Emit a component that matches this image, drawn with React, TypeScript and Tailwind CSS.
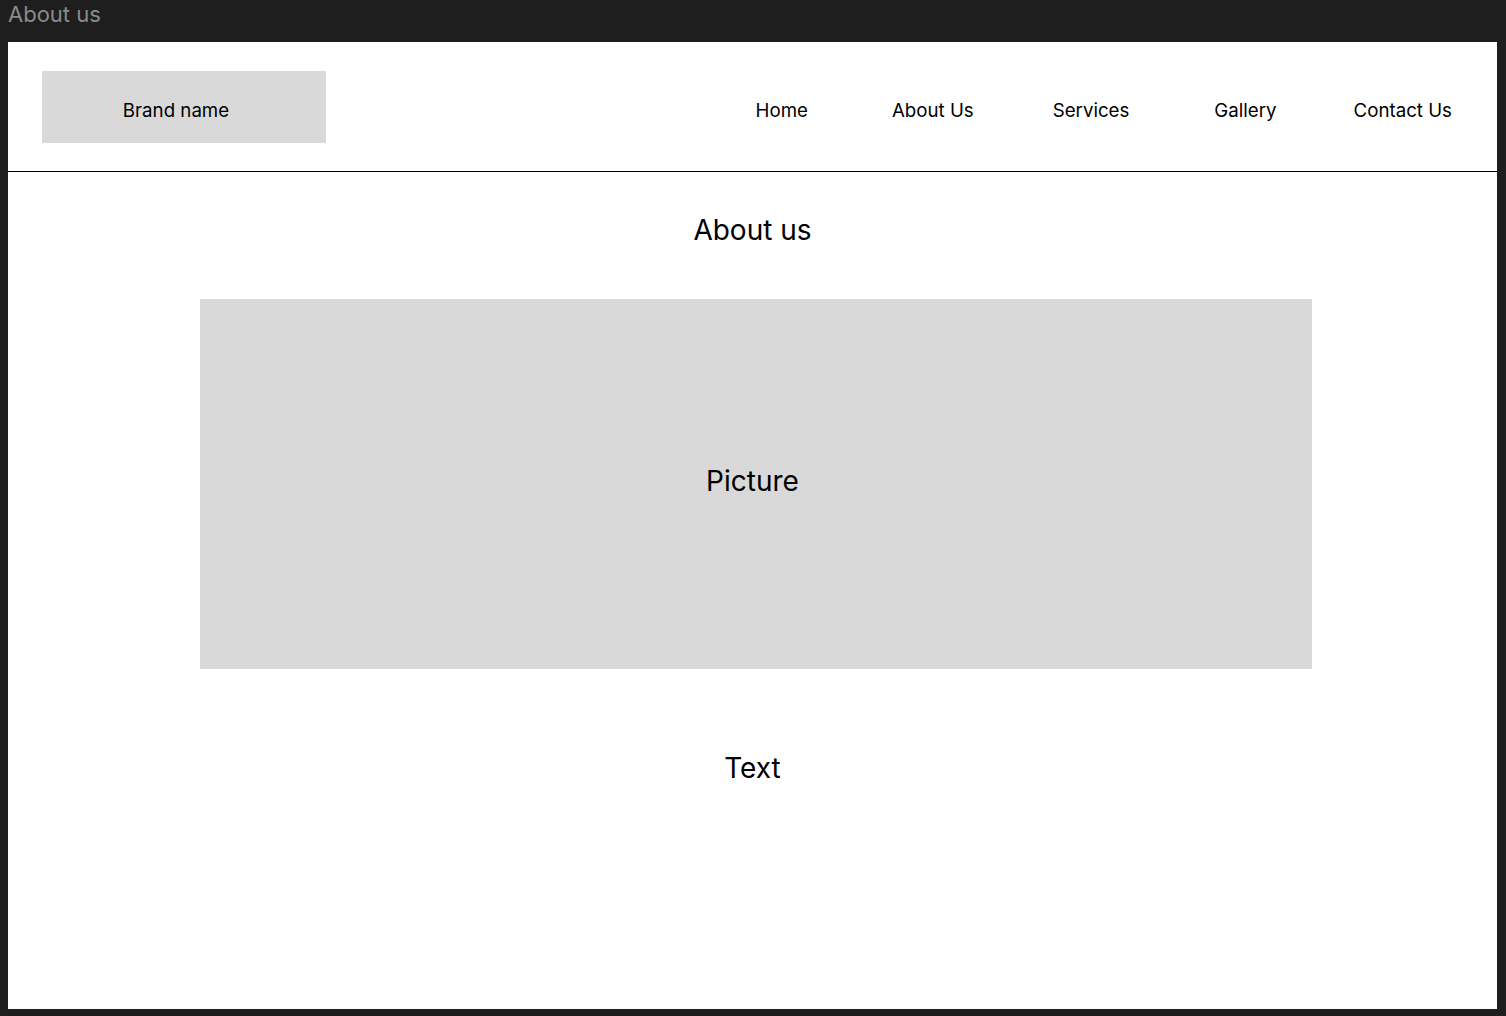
import React from 'react';

const navItems = [
  { label: 'Home', cls: '' },
  { label: 'About Us', cls: 'ml-[84px]' },
  { label: 'Services', cls: 'ml-[79px]' },
  { label: 'Gallery', cls: 'ml-[85px]' },
  { label: 'Contact Us', cls: 'ml-[77px]' },
];

export default function App() {
  return (
    <div className="w-full h-[1016px] bg-[#1e1e1e] overflow-hidden font-['Inter',sans-serif] text-black">
      {/* Frame label */}
      <div className="h-[42px] pl-[8px] text-[22px] leading-[28px] text-[#8b8b8b]">About us</div>

      {/* Frame */}
      <div className="ml-[8px] w-[1489px] h-[967px] bg-white">
        {/* Header */}
        <header className="h-[130px] border-b border-black flex items-start pl-[34px] pr-[45px]">
          <div className="mt-[29px] w-[284px] h-[72px] bg-[#d9d9d9] flex items-center justify-center">
            <span className="text-[18.7px] leading-[22px] pt-[7px] pr-[16px]">Brand name</span>
          </div>
          <nav className="ml-auto mt-[58px] flex items-center">
            {navItems.map((item) => (
              <a key={item.label} className={`text-[18.7px] leading-[22px] ${item.cls}`}>
                {item.label}
              </a>
            ))}
          </nav>
        </header>

        {/* Content */}
        <main className="flex flex-col items-center pt-[41px]">
          <h1 className="text-[28px] leading-[34px] font-normal">About us</h1>
          <div className="mt-[52px] ml-[7px] w-[1112px] h-[370px] bg-[#d9d9d9] flex items-center justify-center">
            <span className="text-[28px] leading-[34px] -mt-[6px] -ml-[7px]">Picture</span>
          </div>
          <p className="mt-[82px] text-[28px] leading-[34px]">Text</p>
        </main>
      </div>
    </div>
  );
}
